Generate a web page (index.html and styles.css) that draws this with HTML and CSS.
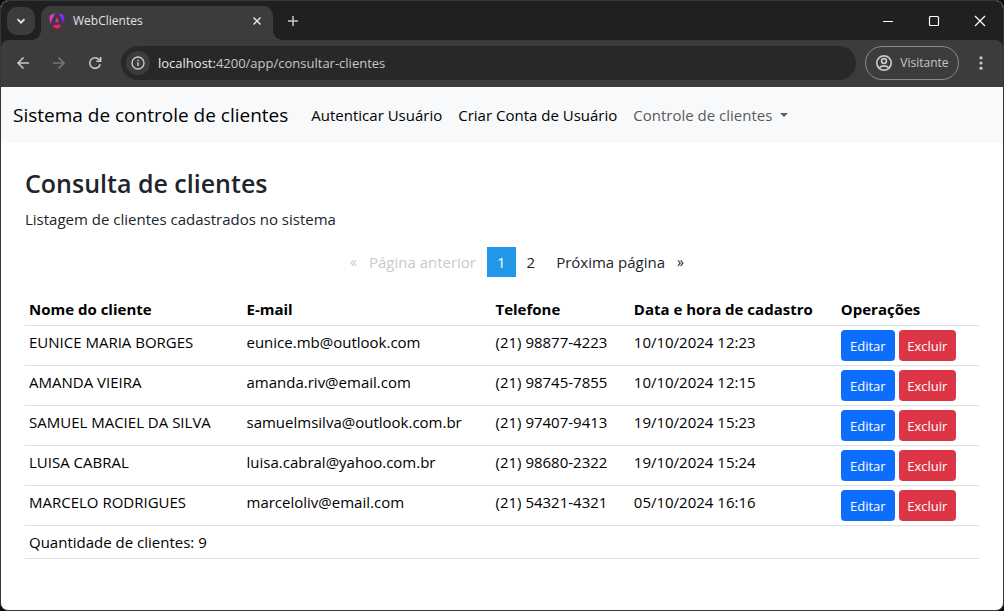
FILE: index.html
```html
<!DOCTYPE html>
<html lang="pt-BR">
<head>
<meta charset="utf-8">
<meta name="viewport" content="width=device-width, initial-scale=1">
<title>WebClientes</title>
<link rel="stylesheet" href="styles.css">
</head>
<body>
<div class="window">
  <header class="chrome">
    <div class="tab-strip">
      <button class="tab-search" type="button" aria-label="Pesquisar guias">
        <svg width="16" height="16" viewBox="0 0 16 16"><path d="M4.5 6.2 8 9.7l3.500-3.500" fill="none" stroke="currentColor" stroke-width="1.8"/></svg>
      </button>
      <div class="tab">
        <svg class="logo" width="16" height="16" viewBox="0 0 223 236">
          <defs>
            <linearGradient id="side" gradientUnits="userSpaceOnUse" x1="0" y1="60" x2="222" y2="90"><stop offset="0" stop-color="#f32fc8"/><stop offset=".4" stop-color="#e030e8"/><stop offset=".7" stop-color="#a52bff"/><stop offset="1" stop-color="#6a1cff"/></linearGradient>
            <linearGradient id="base" gradientUnits="userSpaceOnUse" x1="111" y1="62" x2="111" y2="235"><stop offset="0" stop-color="#e62bd0"/><stop offset=".5" stop-color="#f01e90"/><stop offset="1" stop-color="#ff1050"/></linearGradient>
          </defs>
          <path fill="url(#side)" d="m222.077 39.192-8.019 125.923L137.387 0l84.690 39.192ZM7.937 165.115 0 39.192 84.690 0 7.937 165.115Z"/>
          <path fill="url(#base)" d="m168.972 202.017-57.933 33.056-57.934-33.056 11.783-28.556h92.301l11.783 28.556ZM111.039 62.675l30.357 73.803H80.681l30.358-73.803Z"/>
        </svg>
        <span class="tab-title">WebClientes</span>
        <button class="icon-button tab-close" type="button" aria-label="Fechar guia">
          <svg width="16" height="16" viewBox="0 0 16 16"><path d="m4.500 4.500 7 7m0-7-7 7" stroke="currentColor" stroke-width="1.500"/></svg>
        </button>
      </div>
      <button class="icon-button new-tab" type="button" aria-label="Nova guia">
        <svg width="16" height="16" viewBox="0 0 16 16"><path d="M8 3v10M3 8h10" stroke="currentColor" stroke-width="1.500"/></svg>
      </button>
      <div class="window-controls">
        <button type="button" aria-label="Minimizar"><svg width="12" height="12" viewBox="0 0 12 12"><path d="M1 6.500h10" stroke="currentColor"/></svg></button>
        <button type="button" aria-label="Maximizar"><svg width="12" height="12" viewBox="0 0 12 12"><rect x="1.500" y="1.500" width="9" height="9" rx="1" fill="none" stroke="currentColor" stroke-width="1.200"/></svg></button>
        <button type="button" aria-label="Fechar"><svg width="12" height="12" viewBox="0 0 12 12"><path d="m1 1 10 10M11 1 1 11" stroke="currentColor" stroke-width="1.200"/></svg></button>
      </div>
    </div>
    <div class="toolbar">
      <button class="icon-button" type="button" aria-label="Voltar"><svg width="16" height="16" viewBox="0 0 16 16"><path d="M14 8H3m5.500-5.500L3 8l5.500 5.500" fill="none" stroke="currentColor" stroke-width="1.600"/></svg></button>
      <button class="icon-button" type="button" aria-label="Avançar" disabled><svg width="16" height="16" viewBox="0 0 16 16"><path d="M2 8h11M7.500 2.500 13 8l-5.500 5.500" fill="none" stroke="currentColor" stroke-width="1.600"/></svg></button>
      <button class="icon-button" type="button" aria-label="Recarregar"><svg width="16" height="16" viewBox="0 0 16 16"><path d="M13.200 9.200A5.300 5.300 0 1 1 12 4.500L13.500 6M13.600 2v4.300H9.300" fill="none" stroke="currentColor" stroke-width="1.600"/></svg></button>
      <div class="address">
        <button class="site-info" type="button" aria-label="Informações do site"><svg width="16" height="16" viewBox="0 0 16 16"><circle cx="8" cy="8" r="6" fill="none" stroke="currentColor" stroke-width="1.400"/><path d="M8 7.300v3.800M8 4.700v1.500" stroke="currentColor" stroke-width="1.500"/></svg></button>
        <a class="url" href="#"><span class="host">localhost:</span>4200/app/consultar-clientes</a>
      </div>
      <button class="profile" type="button">
        <svg width="18" height="18" viewBox="0 0 18 18" fill="none" stroke="currentColor" stroke-width="1.700"><circle cx="9" cy="9" r="7.200"/><circle cx="9" cy="7" r="2.400"/><path d="M4 14c2.800-2.800 7.200-2.800 10 0"/></svg>
        Visitante
      </button>
      <button class="icon-button menu" type="button" aria-label="Menu"><svg width="16" height="16" viewBox="0 0 16 16" fill="currentColor"><circle cx="8" cy="2.800" r="1.600"/><circle cx="8" cy="8" r="1.600"/><circle cx="8" cy="13.200" r="1.600"/></svg></button>
    </div>
  </header>

  <nav class="navbar">
    <a class="brand" href="#">Sistema de controle de clientes</a>
    <a class="nav-link" href="#">Autenticar Usuário</a>
    <a class="nav-link" href="#">Criar Conta de Usuário</a>
    <button class="nav-link dropdown" type="button">Controle de clientes</button>
  </nav>

  <main class="content">
    <h1>Consulta de clientes</h1>
    <p class="lead">Listagem de clientes cadastrados no sistema</p>
    <nav class="pagination" aria-label="Paginação">
      <button class="page previous" type="button" disabled><span class="mark">«</span><span>Página anterior</span></button>
      <a class="page current" href="#" aria-current="page">1</a>
      <a class="page" href="#">2</a>
      <a class="page next" href="#"><span>Próxima página</span><span class="mark">»</span></a>
    </nav>
    <table class="clients">
      <colgroup><col class="col-name"><col class="col-mail"><col class="col-phone"><col class="col-date"><col></colgroup>
      <thead>
        <tr><th>Nome do cliente</th><th>E-mail</th><th>Telefone</th><th>Data e hora de cadastro</th><th>Operações</th></tr>
      </thead>
      <tbody>
        <tr><td>EUNICE MARIA BORGES</td><td>eunice.mb@outlook.com</td><td>(21) 98877-4223</td><td>10/10/2024 12:23</td><td><div class="actions"><button class="btn edit" type="button">Editar</button><button class="btn delete" type="button">Excluir</button></div></td></tr>
        <tr><td>AMANDA VIEIRA</td><td>amanda.riv@email.com</td><td>(21) 98745-7855</td><td>10/10/2024 12:15</td><td><div class="actions"><button class="btn edit" type="button">Editar</button><button class="btn delete" type="button">Excluir</button></div></td></tr>
        <tr><td>SAMUEL MACIEL DA SILVA</td><td>samuelmsilva@outlook.com.br</td><td>(21) 97407-9413</td><td>19/10/2024 15:23</td><td><div class="actions"><button class="btn edit" type="button">Editar</button><button class="btn delete" type="button">Excluir</button></div></td></tr>
        <tr><td>LUISA CABRAL</td><td>luisa.cabral@yahoo.com.br</td><td>(21) 98680-2322</td><td>19/10/2024 15:24</td><td><div class="actions"><button class="btn edit" type="button">Editar</button><button class="btn delete" type="button">Excluir</button></div></td></tr>
        <tr><td>MARCELO RODRIGUES</td><td>marceloliv@email.com</td><td>(21) 54321-4321</td><td>05/10/2024 16:16</td><td><div class="actions"><button class="btn edit" type="button">Editar</button><button class="btn delete" type="button">Excluir</button></div></td></tr>
      </tbody>
      <tfoot>
        <tr><td colspan="5">Quantidade de clientes: 9</td></tr>
      </tfoot>
    </table>
  </main>
</div>
</body>
</html>
```
FILE: styles.css
```css
* { box-sizing: border-box; }

body {
  margin: 0;
  background: #0c0c10;
  color: #212529;
  font-family: "Segoe UI", "Open Sans", "Noto Sans", sans-serif;
  font-size: 15px;
  line-height: 24px;
}

button {
  margin: 0;
  padding: 0;
  border: 0;
  background: none;
  color: inherit;
  font: inherit;
}

a { color: inherit; text-decoration: none; }
svg { display: block; flex: none; }

.window {
  display: flex;
  flex-direction: column;
  min-height: 100vh;
  overflow: hidden;
  border: 1px solid #36363a;
  border-radius: 8px;
  background: #fff;
}

/* Browser frame */
.chrome { background: #1f2120; color: #c7c7c7; }

.tab-strip {
  display: flex;
  align-items: center;
  height: 39px;
  padding-left: 6px;
}

.tab-search {
  display: grid;
  place-items: center;
  width: 28px;
  height: 28px;
  border-radius: 10px;
  background: #3c3c3c;
  color: #e3e3e3;
}

.tab {
  position: relative;
  display: flex;
  align-items: center;
  align-self: flex-end;
  width: 232px;
  height: 34px;
  margin-left: 6px;
  padding: 0 8px 5px;
  border-radius: 10px 10px 0 0;
  background: #3c3c3c;
  color: #e3e3e3;
}

.tab::before,
.tab::after {
  content: "";
  position: absolute;
  bottom: 0;
  width: 10px;
  height: 10px;
}
.tab::before { right: 100%; background: radial-gradient(circle at 0 0, transparent 10px, #3c3c3c 10px); }
.tab::after { left: 100%; background: radial-gradient(circle at 100% 0, transparent 10px, #3c3c3c 10px); }

.tab-title { flex: 1; margin-left: 8px; font-size: 12px; }
.icon-button { display: grid; place-items: center; width: 16px; height: 16px; }
.icon-button:disabled { color: #777; }
.new-tab { margin-left: 12px; }

.window-controls { display: flex; margin-left: auto; color: #fff; }
.window-controls button { display: grid; place-items: center; width: 46px; height: 38px; }

.toolbar {
  display: flex;
  align-items: center;
  gap: 20px;
  height: 47px;
  padding: 0 14px 1px;
  border-radius: 8px 8px 0 0;
  background: #3c3c3c;
}

.address {
  display: flex;
  flex: 1;
  align-items: center;
  gap: 8px;
  height: 34px;
  margin-right: -11px;
  margin-left: -2px;
  padding-left: 5px;
  border-radius: 17px;
  background: #282828;
}

.site-info {
  display: grid;
  place-items: center;
  width: 24px;
  height: 24px;
  border-radius: 50%;
  background: #3c3c3c;
}

.url { font-size: 13px; color: #c7c7c7; }
.host { color: #e8e8e8; }

.profile {
  display: flex;
  align-items: center;
  justify-content: center;
  gap: 7px;
  width: 94px;
  height: 34px;
  border: 1px solid #8c8c8c;
  border-radius: 17px;
  font-size: 12px;
}

.menu { margin-left: -6px; }

/* Site navigation */
.navbar {
  display: flex;
  align-items: center;
  height: 56px;
  padding: 0 12px;
  background: #f8f9fa;
  color: #000;
}

.brand { margin-right: 15px; font-size: 19px; line-height: 30px; }
.nav-link { padding: 8px; }
.dropdown { display: flex; align-items: center; color: #595a5b; }
.dropdown::after {
  content: "";
  margin-left: 8px;
  border-top: 4px solid;
  border-right: 4px solid transparent;
  border-left: 4px solid transparent;
}

/* Page content */
.content { padding: 24px; }
h1 { margin: 0 0 8px; font-size: 25px; font-weight: 600; line-height: 32px; }
.lead { margin: 0 0 16px; }

.pagination {
  display: flex;
  justify-content: center;
  gap: 1px;
  margin-bottom: 16px;
  padding-left: 30px;
}

.page { display: flex; gap: 12px; padding: 3px 10px; }
.page.current { background: #2199e8; color: #fefefe; }
.page.previous { color: #cacaca; }
.mark { font-size: 14px; }

.clients { width: 100%; border-collapse: collapse; table-layout: fixed; color: #000; }
.clients th,
.clients td {
  padding: 4px;
  border-bottom: 1px solid #dee2e6;
  text-align: left;
  vertical-align: top;
  white-space: nowrap;
}
.col-name { width: 22.8%; }
.col-mail { width: 26.1%; }
.col-phone { width: 14.5%; }
.col-date { width: 21.7%; }

.actions { display: flex; gap: 4px; }
.btn {
  height: 31px;
  padding: 0 8px;
  border-radius: 4px;
  color: #fff;
  font-size: 13px;
}
.edit { min-width: 54px; background: #0d6efd; }
.delete { min-width: 57px; background: #dc3545; }
```
